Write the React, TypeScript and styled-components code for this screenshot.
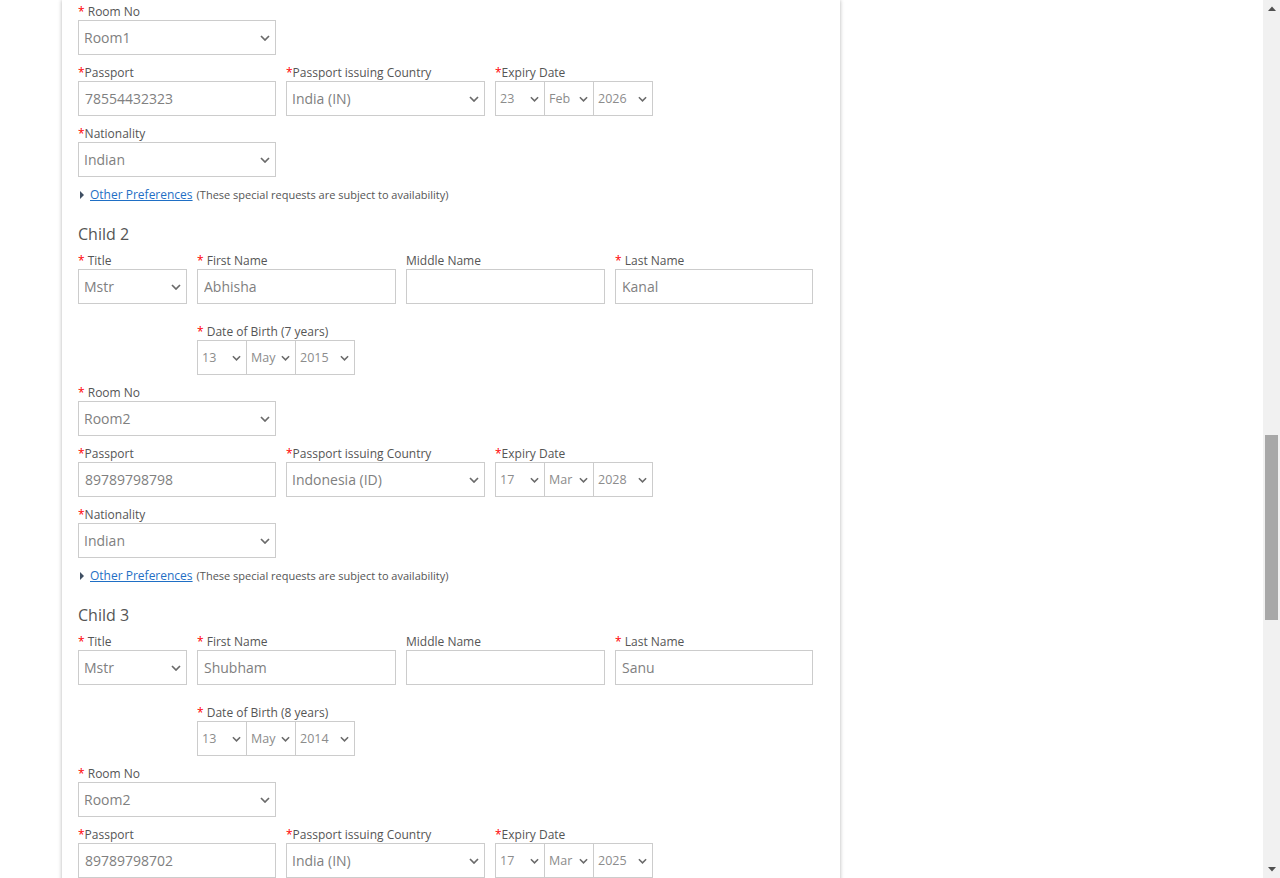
import React from "react";
import styled, { createGlobalStyle } from "styled-components";

type Child = {
  n: number;
  partial?: boolean;
  title?: string;
  first?: string;
  middle?: string;
  last?: string;
  age?: number;
  dob?: [string, string, string];
  room: string;
  passport: string;
  country: string;
  expiry: [string, string, string];
  nationality: string;
};

const children: Child[] = [
  {
    n: 1,
    partial: true,
    room: "Room1",
    passport: "78554432323",
    country: "India (IN)",
    expiry: ["23", "Feb", "2026"],
    nationality: "Indian",
  },
  {
    n: 2,
    title: "Mstr",
    first: "Abhisha",
    middle: "",
    last: "Kanal",
    age: 7,
    dob: ["13", "May", "2015"],
    room: "Room2",
    passport: "89789798798",
    country: "Indonesia (ID)",
    expiry: ["17", "Mar", "2028"],
    nationality: "Indian",
  },
  {
    n: 3,
    title: "Mstr",
    first: "Shubham",
    middle: "",
    last: "Sanu",
    age: 8,
    dob: ["13", "May", "2014"],
    room: "Room2",
    passport: "89789798702",
    country: "India (IN)",
    expiry: ["17", "Mar", "2025"],
    nationality: "Indian",
  },
];

// fake browser scrollbar position (page is scrolled down)
const TRACK_TOP = 17;
const THUMB_TOP = 435;
const THUMB_HEIGHT = 185;

function App() {
  return (
    <>
      <GlobalStyle />
      <Screen>
        <Page>
          <Panel>
            {children.map((c) => (
              <ChildBlock key={c.n} child={c} />
            ))}
          </Panel>
        </Page>
        <Scrollbar>
          <ScrollArrow>
            <svg width="8" height="5" viewBox="0 0 8 5">
              <polygon points="0,5 4,0.5 8,5" fill="#505050" />
            </svg>
          </ScrollArrow>
          <Track>
            <Thumb
              style={{ marginTop: THUMB_TOP - TRACK_TOP, height: THUMB_HEIGHT }}
            />
          </Track>
          <ScrollArrow>
            <svg width="8" height="5" viewBox="0 0 8 5">
              <polygon points="0,0 8,0 4,4.5" fill="#505050" />
            </svg>
          </ScrollArrow>
        </Scrollbar>
      </Screen>
    </>
  );
}

function ChildBlock({ child }: { child: Child }) {
  return (
    <Block>
      {!child.partial && (
        <>
          <Heading>Child {child.n}</Heading>
          <Row $gap={18}>
            <Field $w={109}>
              <Label>
                <Req>*</Req> Title
              </Label>
              <Select value={child.title!} />
            </Field>
            <Field $w={199}>
              <Label>
                <Req>*</Req> First Name
              </Label>
              <TextInput defaultValue={child.first} />
            </Field>
            <Field $w={199}>
              <Label>Middle Name</Label>
              <TextInput defaultValue={child.middle} />
            </Field>
            <Field $w={198}>
              <Label>
                <Req>*</Req> Last Name
              </Label>
              <TextInput defaultValue={child.last} />
            </Field>
          </Row>
          <Row $indent={119}>
            <Field>
              <Label>
                <Req>*</Req> Date of Birth ({child.age} years)
              </Label>
              <DateGroup parts={child.dob!} />
            </Field>
          </Row>
        </>
      )}
      <Row>
        <Field $w={198}>
          <Label>
            <Req>*</Req> Room No
          </Label>
          <Select value={child.room} />
        </Field>
      </Row>
      <Row>
        <Field $w={198}>
          <Label>
            <Req>*</Req>Passport
          </Label>
          <TextInput defaultValue={child.passport} />
        </Field>
        <Field $w={199}>
          <Label>
            <Req>*</Req>Passport issuing Country
          </Label>
          <Select value={child.country} />
        </Field>
        <Field>
          <Label>
            <Req>*</Req>Expiry Date
          </Label>
          <DateGroup parts={child.expiry} />
        </Field>
      </Row>
      <Row>
        <Field $w={198}>
          <Label>
            <Req>*</Req>Nationality
          </Label>
          <Select value={child.nationality} />
        </Field>
      </Row>
      <Prefs>
        <Caret />
        <PrefLink href="#">Other Preferences</PrefLink>
        (These special requests are subject to availability)
      </Prefs>
    </Block>
  );
}

function Chevron({ small }: { small?: boolean }) {
  return (
    <ChevronIcon width={small ? 9 : 10} height="6" viewBox="0 0 10 6">
      <polyline
        points="1,1 5,5 9,1"
        fill="none"
        stroke="#6a6a6a"
        strokeWidth="1.7"
      />
    </ChevronIcon>
  );
}

function Select({ value, small }: { value: string; small?: boolean }) {
  return (
    <SelectWrap>
      <NativeSelect defaultValue={value} $small={small}>
        <option>{value}</option>
      </NativeSelect>
      <Chevron small={small} />
    </SelectWrap>
  );
}

function DateGroup({ parts }: { parts: [string, string, string] }) {
  const widths = [50, 50, 60];
  return (
    <Dates>
      {parts.map((p, i) => (
        <DatePart key={i} $w={widths[i]}>
          <Select value={p} small />
        </DatePart>
      ))}
    </Dates>
  );
}

const GlobalStyle = createGlobalStyle`
  html, body {
    margin: 0;
    padding: 0;
    background: #fff;
    overflow: hidden;
  }
  body {
    font-family: "Open Sans", "Liberation Sans", sans-serif;
  }
`;

const Screen = styled.div`
  display: flex;
  height: 878px;
  overflow: hidden;
`;

const Page = styled.div`
  flex: 1;
  height: 878px;
  overflow: hidden;
`;

const Panel = styled.div`
  margin-left: 62px;
  width: 778px;
  min-height: 878px;
  box-sizing: border-box;
  padding: 2px 16px 0;
  background: #fff;
  box-shadow: 0 0 4px rgba(0, 0, 0, 0.3);
`;

const Block = styled.div``;

const Heading = styled.h3`
  margin: 20px 0 6px;
  font-size: 16px;
  line-height: 22px;
  font-weight: 400;
  color: #555;
`;

const Row = styled.div<{ $gap?: number; $indent?: number }>`
  display: flex;
  gap: 10px;
  margin-bottom: ${(p) => p.$gap ?? 8}px;
  padding-left: ${(p) => p.$indent ?? 0}px;
`;

const Field = styled.div<{ $w?: number }>`
  width: ${(p) => (p.$w ? `${p.$w}px` : "auto")};
  flex: none;
`;

const Label = styled.div`
  box-sizing: border-box;
  height: 18px;
  padding-top: 1px;
  font-size: 12px;
  line-height: 17px;
  color: #555;
  white-space: nowrap;
`;

const Req = styled.span`
  color: #f00;
`;

const TextInput = styled.input`
  display: block;
  box-sizing: border-box;
  width: 100%;
  height: 35px;
  margin: 0;
  padding: 0 6px;
  border: 1px solid #ccc;
  border-radius: 0;
  background: #fff;
  font-family: inherit;
  font-size: 14px;
  color: #808080;
  outline: none;
`;

const SelectWrap = styled.div`
  position: relative;
  width: 100%;
`;

const NativeSelect = styled.select<{ $small?: boolean }>`
  display: block;
  appearance: none;
  box-sizing: border-box;
  width: 100%;
  height: 35px;
  margin: 0;
  padding: ${(p) => (p.$small ? "0 16px 0 4px" : "0 22px 0 5px")};
  border: 1px solid #ccc;
  border-radius: 0;
  background: #fff;
  font-family: inherit;
  font-size: ${(p) => (p.$small ? "12.5px" : "14px")};
  color: ${(p) => (p.$small ? "#8c8c8c" : "#808080")};
  outline: none;
`;

const ChevronIcon = styled.svg`
  position: absolute;
  right: 6px;
  top: 50%;
  margin-top: -3px;
  pointer-events: none;
`;

const Dates = styled.div`
  display: flex;
`;

const DatePart = styled.div<{ $w: number }>`
  width: ${(p) => p.$w}px;
  & + & {
    margin-left: -1px;
  }
`;

const Prefs = styled.div`
  box-sizing: border-box;
  display: flex;
  align-items: center;
  height: 18px;
  padding-top: 1px;
  font-size: 11px;
  line-height: 17px;
  color: #555;
  white-space: nowrap;
`;

const Caret = styled.span`
  width: 0;
  height: 0;
  margin: 0 6px 0 2px;
  border-left: 4px solid #3f4f63;
  border-top: 4px solid transparent;
  border-bottom: 4px solid transparent;
`;

const PrefLink = styled.a`
  margin-right: 4px;
  font-size: 12px;
  color: #1f6fc5;
  text-decoration: underline;
`;

const Scrollbar = styled.div`
  width: 17px;
  flex: none;
  display: flex;
  flex-direction: column;
  background: #f1f1f1;
`;

const ScrollArrow = styled.div`
  height: 17px;
  display: flex;
  align-items: center;
  justify-content: center;
`;

const Track = styled.div`
  flex: 1;
  display: flex;
  flex-direction: column;
  align-items: center;
`;

const Thumb = styled.div`
  width: 13px;
  background: #a8a8a8;
`;

export default App;
